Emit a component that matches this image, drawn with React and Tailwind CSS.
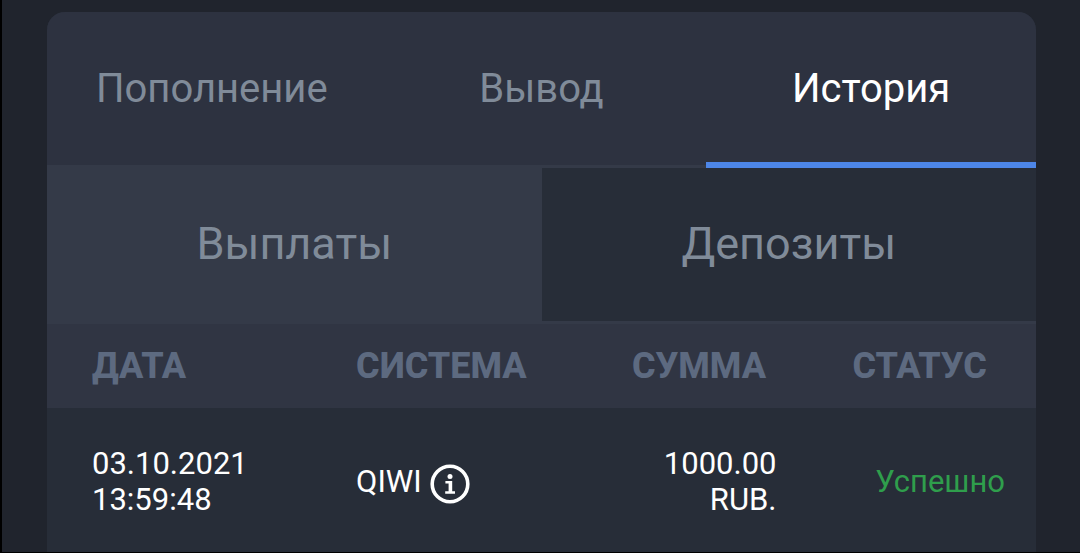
const tabs = [
  { label: "Пополнение", active: false },
  { label: "Вывод", active: false },
  { label: "История", active: true },
];

const rows = [
  {
    date: "03.10.2021",
    time: "13:59:48",
    system: "QIWI",
    amount: "1000.00",
    currency: "RUB.",
    status: "Успешно",
  },
];

function InfoIcon() {
  return (
    <svg viewBox="0 0 40 40" className="size-10" fill="none" aria-hidden="true">
      <circle cx="20" cy="20" r="17.8" stroke="currentColor" strokeWidth="3.6" />
      <circle cx="20" cy="12.4" r="2.5" fill="currentColor" />
      <path d="M15.4 17h6.8v10.2h2.8v2.6h-9.8v-2.6h3.4v-7.6h-3.2z" fill="currentColor" />
    </svg>
  );
}

export default function App() {
  return (
    <div className="flex min-h-screen flex-col border-b border-l-2 border-black bg-[#20242d] pt-3 pr-11 pl-[45px] font-['Roboto',sans-serif]">
      <main className="flex grow flex-col overflow-hidden rounded-t-[18px] bg-[#272d38]">
        <nav className="grid grid-cols-3 bg-[#2d3240] text-[40px] leading-[48px]">
          {tabs.map((tab) => (
            <button
              key={tab.label}
              type="button"
              className={
                tab.active
                  ? "border-b-6 border-[#4d86e8] pt-[53px] pb-[49px] text-white"
                  : "border-b-3 border-[#343a48] pt-[53px] pb-[52px] text-[#808b99]"
              }
            >
              {tab.label}
            </button>
          ))}
        </nav>

        <div className="grid grid-cols-2 text-[45px] leading-[54px] text-[#808b99]">
          <button type="button" className="border-b-3 border-[#343a48] bg-[#343a48] pt-[49px] pb-[50px]">
            Выплаты
          </button>
          <button type="button" className="border-b-3 border-[#343a48] bg-[#272d38] pt-[49px] pb-[50px]">
            Депозиты
          </button>
        </div>

        <table className="w-full table-fixed border-collapse text-left">
          <thead className="bg-[#303543] text-[36px] leading-[44px] text-[#5d6a80]">
            <tr>
              <th className="w-[26.7%] py-5 pl-[45px] font-extrabold">ДАТА</th>
              <th className="w-[27.9%] py-5 pl-[45px] font-extrabold">СИСТЕМА</th>
              <th className="w-[22.3%] py-5 pl-[45px] font-extrabold">СУММА</th>
              <th className="py-5 pl-[45px] font-extrabold">СТАТУС</th>
            </tr>
          </thead>
          <tbody className="text-[31px] leading-9 text-white">
            {rows.map((row) => (
              <tr key={row.date + row.time}>
                <td className="pt-[38px] pb-[34px] pl-[45px]">
                  <div>{row.date}</div>
                  <div>{row.time}</div>
                </td>
                <td className="pt-[38px] pb-[34px] pl-[45px]">
                  <div className="flex items-center gap-2">
                    {row.system}
                    <button type="button" aria-label="Подробнее" className="pt-1">
                      <InfoIcon />
                    </button>
                  </div>
                </td>
                <td className="pt-[38px] pb-[34px] pr-[31px] text-right">
                  <div>{row.amount}</div>
                  <div>{row.currency}</div>
                </td>
                <td className="pt-[38px] pb-[34px] pr-[31px] text-right text-[#2f9e4c]">{row.status}</td>
              </tr>
            ))}
          </tbody>
        </table>
      </main>
    </div>
  );
}
